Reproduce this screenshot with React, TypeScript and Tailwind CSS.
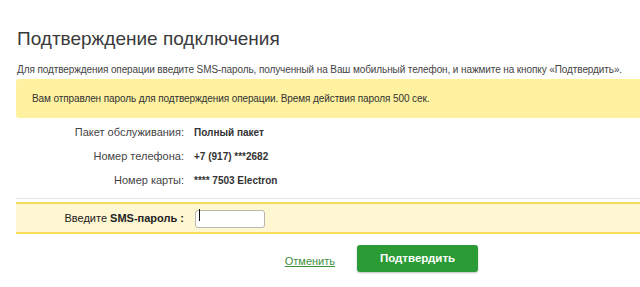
export default function App() {
  const rows = [
    { label: "Пакет обслуживания:", value: "Полный пакет" },
    { label: "Номер телефона:", value: "+7 (917) ***2682" },
    { label: "Номер карты:", value: "**** 7503 Electron" },
  ];

  return (
    <div
      className="w-[640px] h-[287px] overflow-hidden bg-white pl-[16px] text-[#333]"
      style={{ fontFamily: '"Liberation Sans", Arial, sans-serif' }}
    >
      <h1 className="pt-[27px] pl-[1px] text-[19px] leading-[24px] font-normal text-[#3a3a3a]">
        Подтверждение подключения
      </h1>
      <p className="mt-[12px] pl-[1px] text-[10px] leading-[13px] tracking-[-0.1px] whitespace-nowrap text-[#444]">
        Для подтверждения операции введите SMS-пароль, полученный на Ваш мобильный телефон, и нажмите на кнопку «Подтвердить».
      </p>

      <div className="mt-[3px] h-[39px] w-[700px] rounded-l-[3px] bg-[#fef1a0] flex items-center pl-[16px] text-[10px] tracking-[-0.1px] text-[#333]">
        Вам отправлен пароль для подтверждения операции. Время действия пароля 500 сек.
      </div>

      <div className="mt-[2px] flex flex-col">
        {rows.map((r) => (
          <div key={r.label} className="flex items-center h-[24px]">
            <div className="w-[168px] text-right text-[11px] text-[#444]">{r.label}</div>
            <div className="ml-[10px] text-[10px] font-bold text-[#333]">{r.value}</div>
          </div>
        ))}
      </div>

      <div className="mt-[6px] h-px w-[700px] bg-[#e4e2e2]" />

      <div className="mt-[3px] h-[32px] w-[700px] border-y-2 border-[#f7dc5c] bg-[#fef7d2] flex items-center">
        <div className="w-[168px] text-right text-[11px] text-[#222]">
          Введите <span className="font-bold">SMS-пароль :</span>
        </div>
        <div className="relative ml-[11px]">
          <input
            className="h-[18px] w-[70px] rounded-[3px] border border-[#b8b8b0] bg-white px-1 text-[11px] outline-none"
          />
          <span className="absolute left-[4px] top-[3px] h-[12px] w-px bg-[#111]" />
        </div>
      </div>

      <div className="mt-[11px] flex items-center">
        <div className="w-[319px] pt-[2px] text-right">
          <a href="#" className="text-[11px] text-[#3f8f3f] underline">
            Отменить
          </a>
        </div>
        <button className="ml-[22px] h-[27px] w-[121px] rounded-[3px] bg-[#2b9b36] text-[11.5px] font-bold text-white shadow-[0_1px_2px_rgba(0,0,0,0.25)]">
          Подтвердить
        </button>
      </div>
    </div>
  );
}
